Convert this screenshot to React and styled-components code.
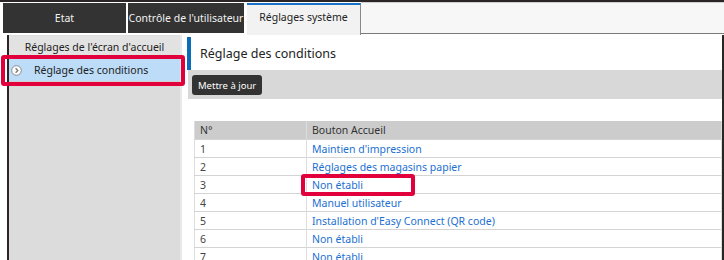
import React from 'react';
import styled, { createGlobalStyle } from 'styled-components';

const GlobalStyle = createGlobalStyle`
  body {
    margin: 0;
    background: #fff;
    font-family: "Noto Sans", "Open Sans", sans-serif;
  }
`;

const rows = [
  { n: 1, label: "Maintien d'impression" },
  { n: 2, label: 'Réglages des magasins papier' },
  { n: 3, label: 'Non établi', marked: true },
  { n: 4, label: 'Manuel utilisateur' },
  { n: 5, label: "Installation d'Easy Connect (QR code)" },
  { n: 6, label: 'Non établi' },
  { n: 7, label: 'Non établi' },
];

const App = () => {
  return (
    <Page>
      <GlobalStyle />
      <TabRow>
        <Tab $width={123}>Etat</Tab>
        <Tab $width={116} $gap={2}>Contrôle de l'utilisateur</Tab>
        <ActiveTab>Réglages système</ActiveTab>
        <TabFiller />
      </TabRow>
      <Main>
        <Sidebar>
          <MenuItem>Réglages de l'écran d'accueil</MenuItem>
          <MenuItem $active>
            <ArrowIcon width="11" height="11" viewBox="0 0 11 11">
              <circle cx="5.5" cy="5.5" r="4.8" fill="#fff" stroke="#8a8a8a" strokeWidth="1" />
              <path d="M4.6 3.3 L6.8 5.5 L4.6 7.7" fill="none" stroke="#7a7a7a" strokeWidth="1.3" />
            </ArrowIcon>
            Réglage des conditions
            <Marker $l={-8} $t={-4} $r={-5} $b={-5} />
          </MenuItem>
        </Sidebar>
        <Content>
          <TitleBar>Réglage des conditions</TitleBar>
          <Toolbar>
            <UpdateButton>Mettre à jour</UpdateButton>
          </Toolbar>
          <TableWrap>
            <Table>
              <thead>
                <tr>
                  <Th $width={106}>N°</Th>
                  <Th>Bouton Accueil</Th>
                </tr>
              </thead>
              <tbody>
                {rows.map((r) => (
                  <tr key={r.n}>
                    <Td>{r.n}</Td>
                    <Td>
                      <LinkText>
                        {r.label}
                        {r.marked && <Marker $l={-11} $t={-4} $r={-52} $b={-4} />}
                      </LinkText>
                    </Td>
                  </tr>
                ))}
              </tbody>
            </Table>
          </TableWrap>
        </Content>
      </Main>
    </Page>
  );
};

export default App;

const Page = styled.div`
  width: 724px;
  height: 260px;
  overflow: hidden;
  border-top: 2px solid #2b2526;
  box-sizing: border-box;
`;

const TabRow = styled.div`
  display: flex;
  height: 33px;
  padding-left: 3px;
`;

const Tab = styled.div`
  width: ${(p) => p.$width}px;
  margin-left: ${(p) => p.$gap || 0}px;
  margin-top: 1px;
  height: 30px;
  background: #333333;
  color: #f2f2f2;
  font-size: 10.5px;
  display: flex;
  align-items: center;
  justify-content: center;
  white-space: nowrap;
`;

const ActiveTab = styled.div`
  width: 114px;
  margin-left: 3px;
  margin-top: 1px;
  height: 32px;
  box-sizing: border-box;
  border-top: 2px solid #1a72c6;
  border-right: 1px solid #8a8a8a;
  background: #f2f2f2;
  color: #222;
  font-size: 10.5px;
  display: flex;
  align-items: center;
  justify-content: center;
  padding-bottom: 6px;
  white-space: nowrap;
`;

const TabFiller = styled.div`
  flex: 1;
  height: 32px;
  box-sizing: border-box;
  border-top: 1px solid #d0d0d0;
  border-bottom: 1px solid #7a7a7a;
  background: #f7f7f7;
`;

const Main = styled.div`
  display: flex;
  height: 225px;
  margin-left: 7px;
  border-left: 2px solid #2b2526;
  border-right: 2px solid #2b2526;
  border-bottom: 2px solid #2b2526;
`;

const Sidebar = styled.div`
  width: 171px;
  flex-shrink: 0;
  background: #dcdcdc;
  border-right: 2px solid #e8e8e8;
  padding-top: 1px;
`;

const MenuItem = styled.div`
  position: relative;
  height: 22px;
  display: flex;
  align-items: center;
  justify-content: ${(p) => (p.$active ? 'flex-start' : 'center')};
  padding-left: ${(p) => (p.$active ? '2px' : '0')};
  background: ${(p) => (p.$active ? '#bcdcf8' : '#e2e2e2')};
  border-bottom: 1px solid #d0d0d0;
  color: #222;
  font-size: 10.5px;
  white-space: nowrap;
`;

const ArrowIcon = styled.svg`
  margin-right: 12px;
  flex-shrink: 0;
`;

const Marker = styled.span`
  position: absolute;
  left: ${(p) => p.$l}px;
  top: ${(p) => p.$t}px;
  right: ${(p) => p.$r}px;
  bottom: ${(p) => p.$b}px;
  border: 4px solid #e2003c;
  border-radius: 3px;
  pointer-events: none;
`;

const Content = styled.div`
  flex: 1;
  margin-left: 4px;
  display: flex;
  flex-direction: column;
  min-width: 0;
  min-height: 0;
  overflow: hidden;
  & > * {
    flex-shrink: 0;
  }
`;

const TitleBar = styled.div`
  height: 33px;
  margin-top: 2px;
  margin-left: 1px;
  border-left: 4px solid #0b6cb8;
  padding-left: 9px;
  display: flex;
  align-items: center;
  font-size: 12.5px;
  color: #222;
`;

const Toolbar = styled.div`
  height: 29px;
  box-sizing: border-box;
  margin-left: 2px;
  background: #d8d8d8;
  padding: 5px 4px;
  display: flex;
  align-items: flex-start;
`;

const UpdateButton = styled.button`
  height: 20px;
  padding: 0 6px;
  border: none;
  border-radius: 3px;
  background: #333333;
  color: #fff;
  font-family: inherit;
  font-size: 9.5px;
  cursor: pointer;
`;

const TableWrap = styled.div`
  padding: 22px 0 0 8px;
`;

const Table = styled.table`
  width: 100%;
  border-collapse: collapse;
  border-left: 1px solid #dddddd;
  font-size: 10.5px;
`;

const Th = styled.th`
  width: ${(p) => (p.$width ? `${p.$width}px` : 'auto')};
  height: 18px;
  padding: 0 0 0 5px;
  background: #cccccc;
  color: #333;
  font-weight: normal;
  text-align: left;
  border-right: 1px solid #dddddd;
`;

const Td = styled.td`
  height: 17px;
  padding: 0 0 0 5px;
  color: #444;
  border-top: 1px solid #d4d4d4;
  border-right: 1px solid #dddddd;
  white-space: nowrap;
`;

const LinkText = styled.span`
  position: relative;
  color: #1c70d2;
`;
